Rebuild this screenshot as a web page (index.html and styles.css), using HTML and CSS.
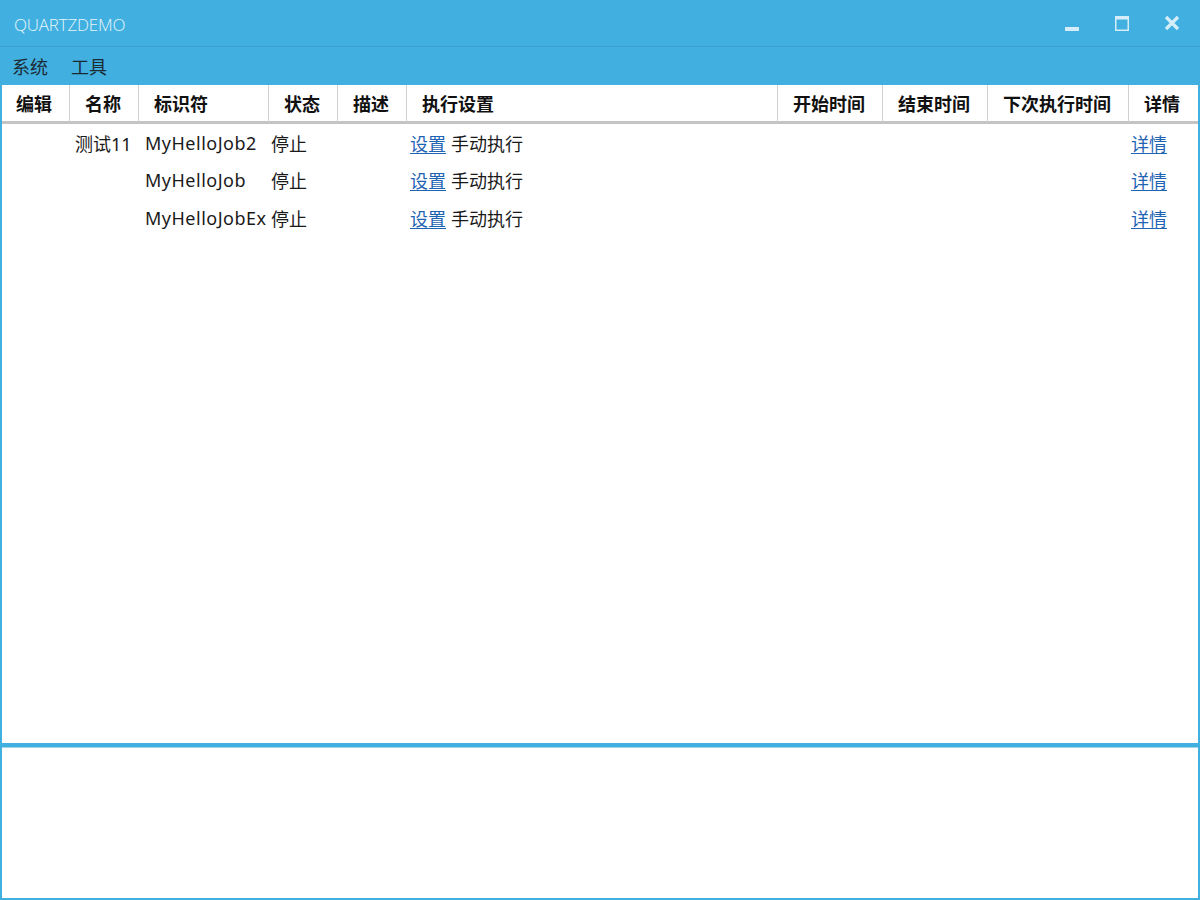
FILE: index.html
```html
<!DOCTYPE html>
<html lang="zh-CN">
<head>
<meta charset="utf-8">
<title>QUARTZDEMO</title>
<link rel="stylesheet" href="styles.css">
</head>
<body>
<div class="window">
  <header class="titlebar">
    <span class="title">QUARTZDEMO</span>
    <div class="controls">
      <span class="ctl ctl-min"><svg width="14" height="14" viewBox="0 0 14 14"><rect x="0" y="10" width="14" height="4" fill="#d5edf8"/></svg></span>
      <span class="ctl ctl-max"><svg width="14" height="15" viewBox="0 0 14 15"><rect x="0.75" y="0.75" width="12.5" height="13.5" fill="none" stroke="#d5edf8" stroke-width="1.5"/><rect x="0" y="0" width="14" height="3.5" fill="#d5edf8"/></svg></span>
      <span class="ctl ctl-close"><svg width="16" height="16" viewBox="0 0 16 16"><path d="M2 2 L14 14 M14 2 L2 14" stroke="#d5edf8" stroke-width="3.2" stroke-linecap="butt"/></svg></span>
    </div>
  </header>
  <nav class="menubar">
    <span class="menu-item">系统</span>
    <span class="menu-item">工具</span>
  </nav>
  <main class="grid-area">
    <div class="grid">
      <div class="hcell">编辑</div>
      <div class="hcell">名称</div>
      <div class="hcell">标识符</div>
      <div class="hcell">状态</div>
      <div class="hcell">描述</div>
      <div class="hcell">执行设置</div>
      <div class="hcell">开始时间</div>
      <div class="hcell">结束时间</div>
      <div class="hcell">下次执行时间</div>
      <div class="hcell last">详情</div>

      <div class="cell"></div>
      <div class="cell c-name">测试11</div>
      <div class="cell c-id">MyHelloJob2</div>
      <div class="cell c-state">停止</div>
      <div class="cell"></div>
      <div class="cell c-exec"><a href="#" class="link">设置</a> 手动执行</div>
      <div class="cell"></div>
      <div class="cell"></div>
      <div class="cell"></div>
      <div class="cell c-detail"><a href="#" class="link">详情</a></div>

      <div class="cell"></div>
      <div class="cell c-name"></div>
      <div class="cell c-id">MyHelloJob</div>
      <div class="cell c-state">停止</div>
      <div class="cell"></div>
      <div class="cell c-exec"><a href="#" class="link">设置</a> 手动执行</div>
      <div class="cell"></div>
      <div class="cell"></div>
      <div class="cell"></div>
      <div class="cell c-detail"><a href="#" class="link">详情</a></div>

      <div class="cell"></div>
      <div class="cell c-name"></div>
      <div class="cell c-id">MyHelloJobEx</div>
      <div class="cell c-state">停止</div>
      <div class="cell"></div>
      <div class="cell c-exec"><a href="#" class="link">设置</a> 手动执行</div>
      <div class="cell"></div>
      <div class="cell"></div>
      <div class="cell"></div>
      <div class="cell c-detail"><a href="#" class="link">详情</a></div>
    </div>
  </main>
  <div class="splitter"></div>
  <section class="log-panel"></section>
</div>
</body>
</html>
```
FILE: styles.css
```css
* { box-sizing: border-box; }
html, body { margin: 0; padding: 0; }
body {
  width: 1200px;
  height: 900px;
  overflow: hidden;
  font-family: "Noto Sans", "Noto Sans CJK SC", sans-serif;
  color: #1a1a1a;
  background: #ffffff;
}
.window {
  width: 1200px;
  height: 900px;
  display: flex;
  flex-direction: column;
  background: #41b0e0;
  padding: 0 2px 2px 2px;
}
.titlebar {
  height: 47px;
  flex: none;
  display: flex;
  align-items: center;
  justify-content: space-between;
  border-bottom: 1px solid #3ba2cf;
  margin: 0 -2px;
  padding: 0 0 0 14px;
}
.title {
  color: #e6f5fc;
  font-size: 17px;
  font-weight: 300;
  letter-spacing: -0.2px;
  font-family: "Open Sans", "Noto Sans", sans-serif;
  padding-top: 2px;
}
.controls {
  display: flex;
  align-items: center;
  height: 100%;
  padding-right: 3px;
}
.ctl {
  display: flex;
  align-items: center;
  justify-content: center;
  width: 50px;
  height: 46px;
}
.ctl-min { padding-top: 2px; }
.ctl-max { padding-top: 1px; }
.menubar {
  height: 38px;
  flex: none;
  display: flex;
  align-items: center;
  gap: 23px;
  padding-left: 12px;
  margin: 0 -2px;
}
.menu-item {
  font-size: 18px;
  color: #1c2a33;
  font-family: "Noto Sans CJK SC", sans-serif;
}
.grid-area {
  flex: 1;
  background: #ffffff;
}
.grid {
  display: grid;
  grid-template-columns: 68px 69px 130px 69px 69px 371px 105px 105px 141px 1fr;
  grid-template-rows: 39px 37.5px 37.5px 37.5px;
}
.hcell {
  font-family: "Noto Sans CJK SC", sans-serif;
  font-weight: 700;
  font-size: 18px;
  display: flex;
  align-items: center;
  padding-left: 15px;
  padding-bottom: 1px;
  border-right: 1px solid #d0d0d0;
  border-bottom: 3px solid #c4c4c4;
  color: #111;
}
.hcell:first-child { padding-left: 14px; }
.hcell.last { border-right: none; }
.cell {
  font-size: 18px;
  display: flex;
  align-items: center;
  white-space: nowrap;
}
.c-name { padding-left: 5px; }
.c-id { padding-left: 6px; letter-spacing: 0.5px; }
.c-state { padding-left: 2px; }
.c-exec { padding-left: 3px; gap: 5px; }
.c-detail { padding-left: 2px; }
.link {
  color: #1f63b3;
  text-decoration: underline;
  text-underline-offset: 2px;
}
.splitter {
  height: 5px;
  flex: none;
  background: #41b0e0;
  border-bottom: 1px solid #9fd3ec;
}
.log-panel {
  height: 150px;
  flex: none;
  background: #ffffff;
}
```
